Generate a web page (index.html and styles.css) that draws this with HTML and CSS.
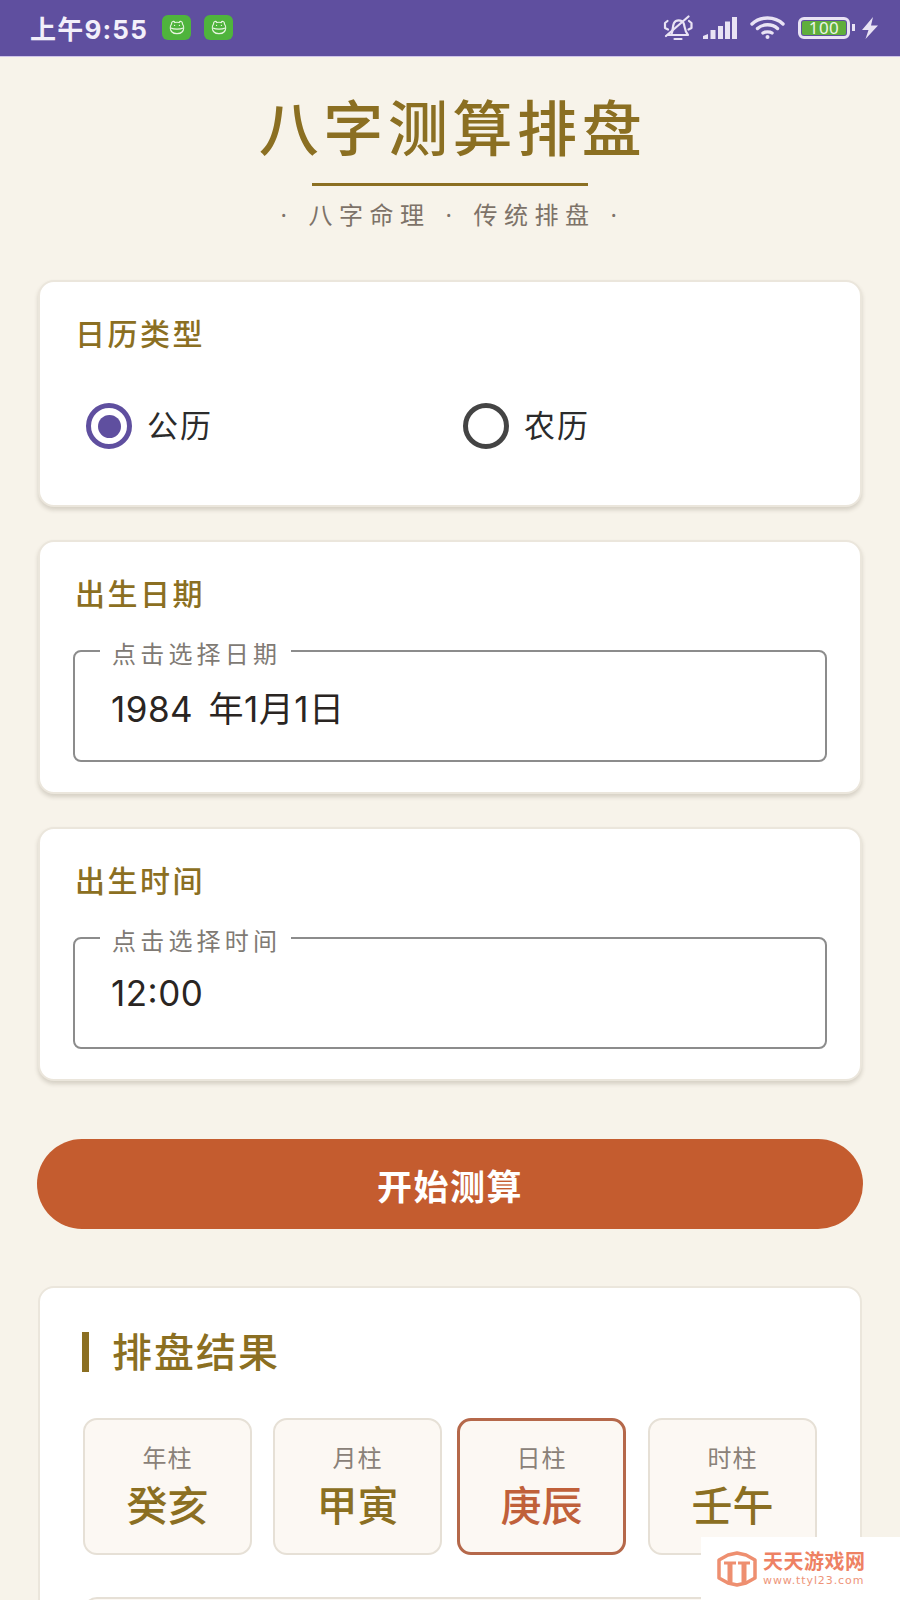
FILE: index.html
```html
<!DOCTYPE html>
<html lang="zh-CN">
<head>
    <meta charset="UTF-8">
    <meta name="viewport" content="width=device-width, initial-scale=1.0">
    <title>八字测算排盘</title>
    <link rel="stylesheet" href="styles.css">
</head>
<body>
<div class="page">
    <div class="statusbar">
        <div class="status-left">
            <span class="time">上午9:55</span>
            <span class="app-icon">
                <svg width="16" height="15" viewBox="0 0 16 15" fill="none" stroke="#e8f5e0" stroke-width="1.2" stroke-linecap="round">
                    <path d="M2.500 4 C2.500 1 5 0.800 5.800 2.500 C7.200 2.200 8.800 2.200 10.200 2.500 C11 0.800 13.500 1 13.500 4 C15.200 6.500 15 10 13 12 C11 14.200 5 14.200 3 12 C1 10 0.800 6.500 2.500 4 Z"/>
                    <path d="M1.800 8 C5 9.500 11 9.500 14.200 8"/>
                    <path d="M5.500 5.400 H5.600 M10.400 5.400 H10.500"/>
                </svg>
            </span>
            <span class="app-icon">
                <svg width="16" height="15" viewBox="0 0 16 15" fill="none" stroke="#e8f5e0" stroke-width="1.2" stroke-linecap="round">
                    <path d="M2.500 4 C2.500 1 5 0.800 5.800 2.500 C7.200 2.200 8.800 2.200 10.200 2.500 C11 0.800 13.500 1 13.500 4 C15.200 6.500 15 10 13 12 C11 14.200 5 14.200 3 12 C1 10 0.800 6.500 2.500 4 Z"/>
                    <path d="M1.800 8 C5 9.500 11 9.500 14.200 8"/>
                    <path d="M5.500 5.400 H5.600 M10.400 5.400 H10.500"/>
                </svg>
            </span>
        </div>
        <div class="status-right">
            <!-- 静音 -->
            <svg class="icon-bell" width="30" height="26" viewBox="0 0 30 26" fill="none" stroke="#e9e3f4" stroke-width="2.200" stroke-linecap="round" stroke-linejoin="round">
                <path d="M8.500 19 C10 16 9.500 11 11 8 C13 4.500 18.500 4.500 20.500 8 C22 11 21 15 25 20 H5"/>
                <path d="M11.500 24 H18.500"/>
                <path d="M4.500 6 L2 8 V13 L5 14.500 M26 6 L28.500 8 V13 L25.500 14.500"/>
                <path d="M3 21 L25.500 1.500"/>
            </svg>
            <!-- 信号 -->
            <svg class="icon-signal" width="34" height="22" viewBox="0 0 34 22" fill="#e9e3f4">
                <path d="M0 22 V19 L5 17 V22 Z"/>
                <rect x="7.500" y="13" width="5" height="9"/>
                <rect x="15" y="9" width="5" height="13"/>
                <rect x="22" y="4.500" width="5" height="17.500"/>
                <rect x="29" y="0" width="5" height="22"/>
            </svg>
            <!-- wifi -->
            <svg class="icon-wifi" width="35" height="23" viewBox="0 0 35 23" fill="none" stroke="#e9e3f4" stroke-width="3.400" stroke-linecap="round">
                <path d="M2 8 C10 0 25 0 33 8"/>
                <path d="M7.500 12.500 C13 7.500 22 7.500 27.500 12.500"/>
                <path d="M13 17 C15 15.500 20 15.500 22 17"/>
                <circle cx="17.500" cy="21" r="2" fill="#e9e3f4" stroke="none"/>
            </svg>
            <div class="battery">
                <div class="battery-body"><span class="battery-level">100</span></div>
                <span class="battery-nub"></span>
            </div>
            <svg class="icon-bolt" width="16" height="22" viewBox="0 0 16 22" fill="#e9e3f4">
                <path d="M11 0 L0 13 H6.500 L3.500 22 L16 8.500 H9 Z"/>
            </svg>
        </div>
    </div>

    <header class="hero">
        <h1 class="hero-title">八字测算排盘</h1>
        <div class="hero-line"></div>
        <p class="hero-sub"><span>·</span><span>八字命理</span><span>·</span><span>传统排盘</span><span>·</span></p>
    </header>

    <main class="content">
        <section class="card">
            <h2 class="card-title">日历类型</h2>
            <div class="radio-row">
                <label class="radio-item">
                    <span class="radio radio-on"></span>
                    <span class="radio-text">公历</span>
                </label>
                <label class="radio-item">
                    <span class="radio"></span>
                    <span class="radio-text">农历</span>
                </label>
            </div>
        </section>

        <section class="card">
            <h2 class="card-title">出生日期</h2>
            <div class="field">
                <span class="field-label">点击选择日期</span>
                <span class="field-value">1984 年1月1日</span>
            </div>
        </section>

        <section class="card">
            <h2 class="card-title">出生时间</h2>
            <div class="field">
                <span class="field-label">点击选择时间</span>
                <span class="field-value">12:00</span>
            </div>
        </section>

        <button class="submit-btn" type="button">开始测算</button>

        <section class="card result-card">
            <h2 class="result-title">排盘结果</h2>
            <div class="pillars">
                <div class="pillar">
                    <span class="pillar-label">年柱</span>
                    <span class="pillar-value">癸亥</span>
                </div>
                <div class="pillar">
                    <span class="pillar-label">月柱</span>
                    <span class="pillar-value">甲寅</span>
                </div>
                <div class="pillar pillar-active">
                    <span class="pillar-label">日柱</span>
                    <span class="pillar-value">庚辰</span>
                </div>
                <div class="pillar">
                    <span class="pillar-label">时柱</span>
                    <span class="pillar-value">壬午</span>
                </div>
            </div>
            <div class="detail-box"></div>
        </section>
    </main>

    <!-- 水印 -->
    <div class="watermark">
        <svg class="watermark-logo" width="40" height="36" viewBox="0 0 40 36" fill="none" stroke="#ee8f70" stroke-linejoin="round">
            <path d="M11 4 L20 2 L29 4 L38 9 V27 L29 32 L20 34 L11 32 L2 27 V9 Z" stroke-width="3.500"/>
            <path d="M7 12 H19 M21 12 H33" stroke-width="3"/>
            <path d="M13 12 V31 M27 12 V31" stroke-width="5"/>
        </svg>
        <div class="watermark-text">
            <span class="watermark-name">天天游戏网</span>
            <span class="watermark-url">www.ttyl23.com</span>
        </div>
    </div>
</div>
</body>
</html>
```

FILE: styles.css
```css
* {
    box-sizing: border-box;
}

body {
    margin: 0;
    padding: 0;
    font-family: "Noto Sans", "Noto Sans CJK SC", sans-serif;
    background-color: #f7f3ea;
}

.page {
    position: relative;
    height: 1600px;
    overflow: hidden;
}

/* status bar */
.statusbar {
    height: 57px;
    background-color: #5f4f9f;
    border-bottom: 1px solid #cfc4ea;
    display: flex;
    align-items: center;
    justify-content: space-between;
    padding: 0 22px 1px 30px;
}

.status-left {
    display: flex;
    align-items: center;
}

.time {
    color: #f3effa;
    font-size: 26px;
    font-weight: 700;
    letter-spacing: 1.2px;
    margin-right: 14px;
    font-family: Inter, "Noto Sans CJK SC", sans-serif;
}

.app-icon {
    width: 29px;
    height: 25px;
    border-radius: 6px;
    background-color: #4fb43c;
    display: flex;
    align-items: center;
    justify-content: center;
    margin-right: 13px;
}

.status-right {
    display: flex;
    align-items: center;
}

.icon-bell {
    margin-right: 10px;
}

.icon-signal {
    margin-right: 13px;
}

.icon-wifi {
    margin-right: 13px;
}

.battery {
    display: flex;
    align-items: center;
    margin-right: 7px;
}

.battery-body {
    width: 52px;
    height: 22px;
    border: 3px solid #e9e3f4;
    border-radius: 6px;
    padding: 1px;
    display: flex;
}

.battery-level {
    flex: 1;
    background-color: #5fae3c;
    color: #eef5e6;
    font-size: 17px;
    line-height: 14px;
    text-align: center;
    border-radius: 2px;
    letter-spacing: 0.5px;
}

.battery-nub {
    width: 3px;
    height: 7px;
    margin-left: 2px;
    background-color: #e9e3f4;
}

/* header */
.hero {
    text-align: center;
    padding-top: 33px;
}

.hero-title {
    margin: 0;
    padding-left: 5px;
    font-size: 60px;
    line-height: 76px;
    font-weight: 500;
    letter-spacing: 4.6px;
    color: #8b6f22;
}

.hero-line {
    width: 276px;
    height: 3px;
    margin: 17px auto 0;
    background-color: #8b6f22;
}

.hero-sub {
    margin: 12px 0 0;
    padding-left: 4px;
    display: flex;
    justify-content: center;
    gap: 15px;
    font-size: 24px;
    line-height: 34px;
    letter-spacing: 6.5px;
    color: #7d7268;
}

/* cards */
.content {
    padding: 48px 38px 0;
    display: flex;
    flex-direction: column;
    gap: 33px;
}

.card {
    background-color: #fff;
    border: 2px solid #ebe6dc;
    border-radius: 16px;
    padding: 30px 33px 30px;
    box-shadow: 0 3px 4px rgba(80, 70, 50, 0.2);
}

.card-title {
    margin: 0;
    padding-left: 2px;
    font-size: 30px;
    line-height: 44px;
    font-weight: 500;
    letter-spacing: 2.5px;
    color: #8b6f22;
}

.radio-row {
    display: flex;
    padding: 47px 0 26px;
}

.radio-item {
    width: 377px;
    display: flex;
    align-items: center;
    gap: 15px;
    padding-left: 13px;
}

.radio {
    width: 46px;
    height: 46px;
    border: 5px solid #444;
    border-radius: 50%;
    display: flex;
    align-items: center;
    justify-content: center;
}

.radio-on {
    border-color: #5f4f9f;
}

.radio-on::after {
    content: "";
    width: 23px;
    height: 23px;
    border-radius: 50%;
    background-color: #5f4f9f;
}

.radio-text {
    padding-bottom: 3px;
    font-size: 31px;
    line-height: 40px;
    letter-spacing: 2px;
    color: #2b2b2b;
}

.field {
    position: relative;
    height: 112px;
    margin-top: 34px;
    border: 2px solid #8c8c8c;
    border-radius: 8px;
    padding-left: 36px;
    display: flex;
    align-items: center;
}

.field-label {
    position: absolute;
    left: 25px;
    top: -12px;
    padding: 0 10px 0 12px;
    background-color: #fff;
    font-size: 24px;
    line-height: 28px;
    letter-spacing: 4.2px;
    color: #807a74;
}

.field-value {
    font-family: Inter, "Noto Sans CJK SC", sans-serif;
    font-size: 35px;
    font-feature-settings: "calt" 1;
    letter-spacing: 0.5px;
    word-spacing: 5px;
    color: #2a2522;
}

.submit-btn {
    height: 90px;
    margin: 25px -1px 24px;
    border: none;
    border-radius: 45px;
    background-color: #c45c2f;
    color: #fff;
    font-family: inherit;
    font-size: 35px;
    font-weight: 700;
    letter-spacing: 1.5px;
}

/* result */
.result-card {
    padding: 44px 42px 0;
    box-shadow: none;
    height: 400px;
}

.result-title {
    margin: 0;
    height: 40px;
    border-left: 7px solid #8b6f22;
    padding-left: 23px;
    font-size: 40px;
    line-height: 40px;
    font-weight: 500;
    letter-spacing: 2px;
    color: #8b6f22;
}

.pillars {
    display: flex;
    gap: 21px;
    margin: 46px 0 42px 1px;
}

.pillar {
    width: 169px;
    height: 137px;
    border: 2px solid #e6e0d6;
    border-radius: 14px;
    background-color: #fcf8f3;
    display: flex;
    flex-direction: column;
    align-items: center;
    padding-top: 21px;
}

.pillar-active {
    margin: 0 1px 0 -6px;
    border: 3px solid #b5684a;
    padding-top: 20px;
}

.pillar-label {
    font-size: 24px;
    line-height: 34px;
    letter-spacing: 1px;
    color: #8a8178;
}

.pillar-value {
    margin-top: 4px;
    font-size: 41px;
    line-height: 52px;
    font-weight: 500;
    color: #8b6f22;
}

.pillar-active .pillar-value {
    color: #c0603a;
}

.detail-box {
    height: 60px;
    margin-left: 1px;
    width: 734px;
    border: 2px solid #e6e0d6;
    border-radius: 14px;
    background-color: #fcf8f3;
}

/* watermark */
.watermark {
    position: absolute;
    right: 0;
    bottom: 0;
    width: 199px;
    height: 63px;
    background-color: #fff;
    display: flex;
    align-items: center;
    gap: 6px;
    padding-left: 16px;
}

.watermark-text {
    display: flex;
    flex-direction: column;
}

.watermark-name {
    font-size: 20px;
    line-height: 24px;
    font-weight: 700;
    letter-spacing: 0.5px;
    color: #ee8163;
}

.watermark-url {
    font-size: 11px;
    line-height: 14px;
    letter-spacing: 0.9px;
    color: #ee9479;
    font-family: "DejaVu Sans", sans-serif;
}
```
